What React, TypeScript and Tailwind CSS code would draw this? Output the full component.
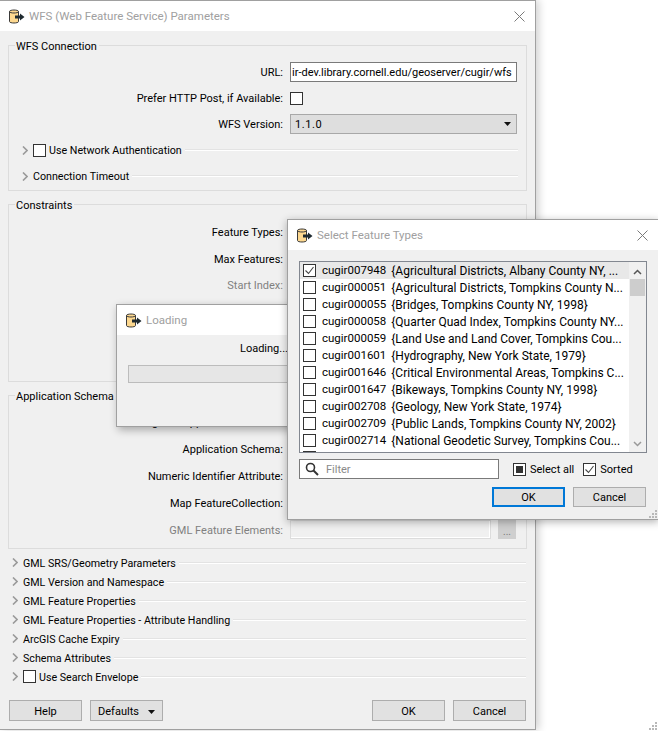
import type { ReactNode } from "react";

const features: [string, string][] = [
  ["cugir007948", "{Agricultural Districts, Albany County NY, ..."],
  ["cugir000051", "{Agricultural Districts, Tompkins County N..."],
  ["cugir000055", "{Bridges, Tompkins County NY, 1998}"],
  ["cugir000058", "{Quarter Quad Index, Tompkins County NY..."],
  ["cugir000059", "{Land Use and Land Cover, Tompkins Cou..."],
  ["cugir001601", "{Hydrography, New York State, 1979}"],
  ["cugir001646", "{Critical Environmental Areas, Tompkins C..."],
  ["cugir001647", "{Bikeways, Tompkins County NY, 1998}"],
  ["cugir002708", "{Geology, New York State, 1974}"],
  ["cugir002709", "{Public Lands, Tompkins County NY, 2002}"],
  ["cugir002714", "{National Geodetic Survey, Tompkins Cou..."],
];

const bottomSections = [
  "GML SRS/Geometry Parameters",
  "GML Version and Namespace",
  "GML Feature Properties",
  "GML Feature Properties - Attribute Handling",
  "ArcGIS Cache Expiry",
  "Schema Attributes",
];

function DbIcon() {
  return (
    <svg width="17" height="17" viewBox="0 0 17 17" className="shrink-0">
      <path d="M1.5 3.5C1.5 1.5 10.5 1.5 10.5 3.5V13.5C10.5 15.5 1.5 15.5 1.5 13.5Z" fill="#fdd88f" stroke="#3a3a3a" />
      <path d="M1.5 3.5C1.5 5.5 10.5 5.5 10.5 3.5" fill="none" stroke="#3a3a3a" />
      <path d="M7 7.5H12V5.5L16.5 9L12 12.5V10.5H7Z" fill="#1f2a30" />
    </svg>
  );
}

function CloseIcon() {
  return (
    <svg width="11" height="11" viewBox="0 0 11 11">
      <path d="M0.5 0.5L10.5 10.5M10.5 0.5L0.5 10.5" stroke="#7a7a7a" fill="none" />
    </svg>
  );
}

function Chevron() {
  return (
    <svg width="6" height="9" viewBox="0 0 6 9" className="shrink-0">
      <path d="M1 0.5L5 4.5L1 8.5" stroke="#9a9a9a" strokeWidth="1.6" fill="none" />
    </svg>
  );
}

function Caret() {
  return (
    <svg width="7" height="4" viewBox="0 0 7 4">
      <path d="M0 0H7L3.5 4Z" fill="#111" />
    </svg>
  );
}

function Grip() {
  return (
    <svg width="8" height="8" viewBox="0 0 8 8" className="absolute right-[1px] bottom-[1px]">
      <path d="M6 0h2v2h-2zM3 3h2v2h-2zM6 3h2v2h-2zM0 6h2v2h-2zM3 6h2v2h-2zM6 6h2v2h-2z" fill="#b8b8b8" />
    </svg>
  );
}

function Box({ checked, mixed }: { checked?: boolean; mixed?: boolean }) {
  return (
    <span className="flex h-[13px] w-[13px] shrink-0 items-center justify-center border border-[#333] bg-white">
      {checked && (
        <svg width="11" height="11" viewBox="0 0 11 11">
          <path d="M1.5 5.5L4.5 8.5L9.5 2" stroke="#444" fill="none" strokeWidth="1.1" />
        </svg>
      )}
      {mixed && <span className="h-[7px] w-[7px] bg-[#333]" />}
    </span>
  );
}

function TitleBar({ title, close = true }: { title: string; close?: boolean }) {
  return (
    <div className="flex h-[30px] shrink-0 items-center bg-white pl-[8px] pr-[10px]">
      <DbIcon />
      <span className="ml-[4px] flex-1 pt-[1px] text-[11.5px] text-[#a0a0a0]">{title}</span>
      {close && <CloseIcon />}
    </div>
  );
}

function Group({ title, className, children }: { title: string; className: string; children: ReactNode }) {
  return (
    <div className={`relative mx-[8px] border border-[#dcdcdc] ${className}`}>
      <span className="absolute left-[6px] top-[-7px] bg-[#f0f0f0] pl-[1px] pr-[2px] leading-[16px] text-black">{title}</span>
      {children}
    </div>
  );
}

function Row({ label, muted, h, children }: { label: string; muted?: boolean; h: string; children?: ReactNode }) {
  return (
    <div className={`flex items-center ${h}`}>
      <span className={`w-[274px] pt-[3px] text-right ${muted ? "text-[#808080]" : "text-black"}`}>{label}</span>
      <div className="ml-[7px] flex min-w-0 flex-1 items-center pr-[9px]">{children}</div>
    </div>
  );
}

function Section({ label, left, box, h }: { label: string; left: string; box?: boolean; h: string }) {
  return (
    <div className={`flex items-center ${left} ${h}`}>
      <Chevron />
      {box ? (
        <span className="ml-[5px]">
          <Box />
        </span>
      ) : null}
      <span className={`${box ? "ml-[3px]" : "ml-[5px]"} whitespace-nowrap pt-[3px] text-[10.7px] text-black`}>{label}</span>
      <span className="ml-[3px] h-[2px] flex-1 border-t border-[#e3e3e3] bg-white" />
    </div>
  );
}

function Btn({ children, w, primary, h = "h-[21px]" }: { children: ReactNode; w: string; primary?: boolean; h?: string }) {
  return (
    <button
      type="button"
      className={`flex items-center justify-center bg-[#e1e1e1] pt-[3px] text-black ${h} ${w} ${
        primary ? "border-2 border-[#0078d7]" : "border border-[#adadad]"
      }`}
    >
      {children}
    </button>
  );
}

export default function App() {
  return (
    <div className="relative h-[731px] w-[658px] overflow-hidden bg-white font-['Roboto',sans-serif] text-[11px]">
      {/* main parameters window */}
      <div className="flex h-[730px] w-[536px] flex-col border-r border-t border-b border-[#a0a0a0] bg-[#f0f0f0] shadow-[3px_0_8px_rgba(0,0,0,0.18)]">
        <TitleBar title="WFS (Web Feature Service) Parameters" />

        <Group title="WFS Connection" className="mt-[14px] h-[146px] pt-[15px]">
          <Row label="URL:" h="h-[22px]">
            <div className="flex h-[20px] w-full items-center overflow-hidden border border-[#7a7a7a] bg-white pl-[1px] pt-[3px]">
              <span className="whitespace-nowrap">ir-dev.library.cornell.edu/geoserver/cugir/wfs</span>
            </div>
          </Row>
          <Row label="Prefer HTTP Post, if Available:" h="h-[30px]">
            <Box />
          </Row>
          <Row label="WFS Version:" h="h-[22px]">
            <div className="flex h-[20px] w-full items-center justify-between border border-[#a8a8a8] bg-[#dedede] pl-[4px] pr-[5px] tracking-[0.6px]">
              <span className="pt-[2px]">1.1.0</span>
              <Caret />
            </div>
          </Row>
          <div className="pr-[8px]">
            <Section label="Use Network Authentication" left="ml-[13px] mt-[2px]" box h="h-[26px]" />
            <Section label="Connection Timeout" left="ml-[13px]" h="h-[26px]" />
          </div>
        </Group>

        <Group title="Constraints" className="mt-[13px] h-[178px] pt-[13px]">
          <Row label="Feature Types:" h="h-[27px]" />
          <Row label="Max Features:" h="h-[27px]" />
          <Row label="Start Index:" muted h="h-[25px]" />
        </Group>

        <Group title="Application Schema" className="mt-[13px] h-[154px] pt-[13px]">
          <Row label="Ignore Application Schema:" h="h-[26px]" />
          <Row label="Application Schema:" h="h-[27px]" />
          <Row label="Numeric Identifier Attribute:" h="h-[27px]" />
          <Row label="Map FeatureCollection:" h="h-[27px]" />
          <Row label="GML Feature Elements:" muted h="h-[27px]">
            <div className="h-[19px] w-[201px] border border-[#dcdcdc] bg-[#f0f0f0] shadow-[inset_-1px_-1px_0_#fff]" />
            <div className="ml-[7px] flex h-[19px] w-[18px] items-end justify-center bg-[#cfcfcf] pb-[2px] text-[10px] leading-[10px] text-[#777]">
              ...
            </div>
          </Row>
        </Group>

        <div className="mt-[4px] flex flex-col pr-[9px]">
          {bottomSections.map((s) => (
            <Section key={s} label={s} left="ml-[12px]" h="h-[19px]" />
          ))}
          <Section label="Use Search Envelope" left="ml-[12px]" box h="h-[19px]" />
        </div>

        <div className="mt-[14px] flex px-[9px]">
          <Btn w="w-[73px]">Help</Btn>
          <div className="ml-[8px]">
            <Btn w="w-[73px]">
              <span className="mr-[9px]">Defaults</span>
              <Caret />
            </Btn>
          </div>
          <div className="ml-auto flex gap-[8px]">
            <Btn w="w-[73px]">OK</Btn>
            <Btn w="w-[73px]">Cancel</Btn>
          </div>
        </div>
        <Grip />
      </div>

      {/* loading dialog */}
      <div className="absolute left-[116px] top-[304px] flex h-[123px] w-[296px] flex-col border border-[#a0a0a0] bg-[#f0f0f0] shadow-[2px_3px_8px_rgba(0,0,0,0.3)]">
        <TitleBar title="Loading" close={false} />
        <div className="mt-[6px] text-center leading-[16px] text-black">Loading...</div>
        <div className="mx-[11px] mt-[8px] h-[18px] border border-[#bcbcbc] bg-[#e6e6e6]" />
      </div>

      {/* feature type picker */}
      <div className="absolute left-[287px] top-[219px] flex h-[301px] w-[372px] flex-col border border-[#a0a0a0] bg-[#f0f0f0] shadow-[0_2px_8px_rgba(0,0,0,0.3)]">
        <TitleBar title="Select Feature Types" />
        <div className="mx-[11px] mt-[11px] flex h-[192px] border border-[#828790] bg-white">
          <div className="flex-1 overflow-hidden">
            {features.map(([id, name], i) => (
              <div key={id} className={`flex h-[17px] items-center pl-[3px] text-[12px] ${i === 0 ? "bg-[#e8e8e8]" : ""}`}>
                <Box checked={i === 0} />
                <span className="ml-[6px] whitespace-nowrap pt-[1px] text-[11.5px] text-black">{id}</span>
                <span className="ml-[5px] whitespace-nowrap pt-[1px] text-black">{name}</span>
              </div>
            ))}
            <div className="flex h-[17px] items-center pl-[3px]">
              <Box />
            </div>
          </div>
          <div className="flex w-[17px] shrink-0 flex-col items-center bg-[#f0f0f0]">
            <svg width="9" height="6" viewBox="0 0 9 6" className="mt-[7px]">
              <path d="M1 5L4.5 1.5L8 5" stroke="#555" strokeWidth="1.5" fill="none" />
            </svg>
            <div className="mt-[4px] h-[17px] w-[15px] bg-[#cdcdcd]" />
            <svg width="9" height="6" viewBox="0 0 9 6" className="mb-[5px] mt-auto">
              <path d="M1 1L4.5 4.5L8 1" stroke="#999" strokeWidth="1.5" fill="none" />
            </svg>
          </div>
        </div>
        <div className="mx-[11px] mt-[6px] flex h-[20px] items-center">
          <div className="flex h-[20px] w-[200px] items-center border border-[#7a7a7a] bg-white pl-[5px]">
            <svg width="14" height="14" viewBox="0 0 14 14">
              <circle cx="5.5" cy="5.5" r="4" fill="none" stroke="#333" strokeWidth="1.6" />
              <path d="M8.5 8.5L13 13" stroke="#333" strokeWidth="2" />
            </svg>
            <span className="ml-[7px] pt-[2px] text-[#8a8a8a]">Filter</span>
          </div>
          <span className="ml-[14px]">
            <Box mixed />
          </span>
          <span className="ml-[4px] pt-[2px] text-black">Select all</span>
          <span className="ml-[9px]">
            <Box checked />
          </span>
          <span className="ml-[4px] pt-[2px] text-black">Sorted</span>
        </div>
        <div className="mr-[12px] mt-[8px] flex justify-end gap-[8px]">
          <Btn w="w-[73px]" h="h-[20px]" primary>
            OK
          </Btn>
          <Btn w="w-[73px]" h="h-[20px]">
            Cancel
          </Btn>
        </div>
        <Grip />
      </div>
    </div>
  );
}
